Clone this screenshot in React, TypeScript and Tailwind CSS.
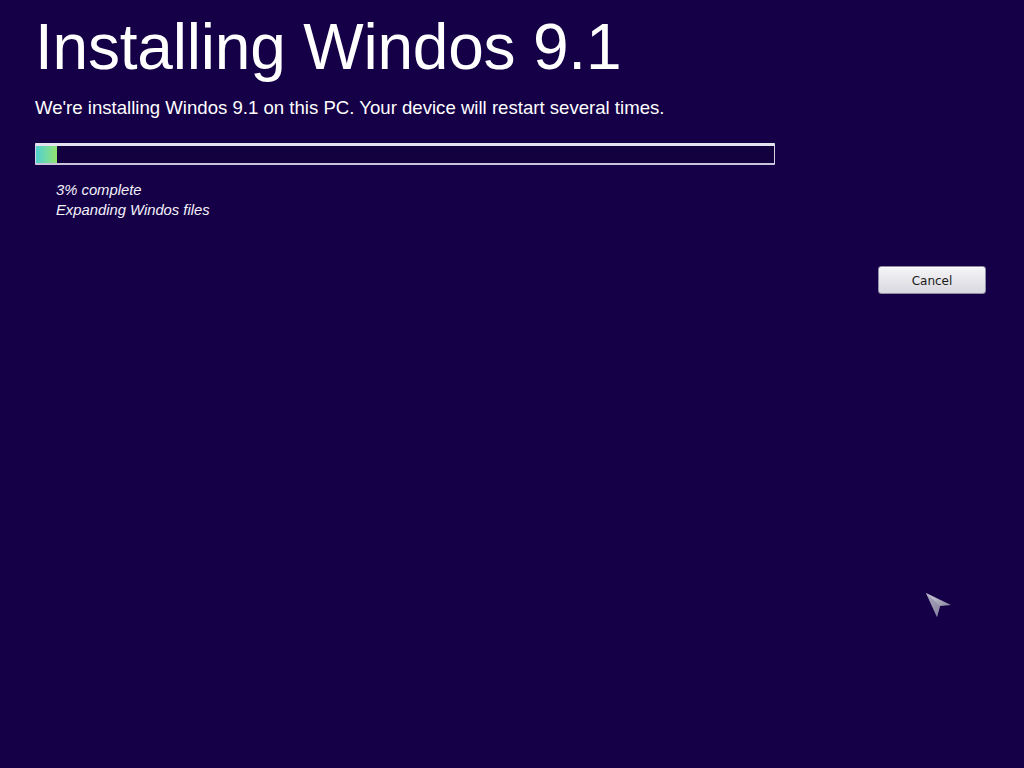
export default function App() {
  return (
    <div className="relative w-[1024px] h-[768px] overflow-hidden bg-[#150048] font-['Liberation_Sans',Arial,sans-serif] text-white">
      <div className="pl-[35px] pt-[9px]">
        <h1 className="text-[64px] leading-[76px] tracking-[-0.2px]">Installing Windos 9.1</h1>
        <p className="mt-[12px] text-[18.6px] leading-[22px]">
          We're installing Windos 9.1 on this PC. Your device will restart several times.
        </p>

        {/* progress bar */}
        <div className="mt-[24px] w-[740px] h-[22px] border border-[#d6d2e6] border-t-[3px] border-t-[#e4e2ee] border-b-2 border-b-[#c8c2dc] bg-[#12003f] rounded-[1px]">
          <div className="w-[21px] h-full bg-gradient-to-r from-[#4fcfd0] to-[#92e36a]" />
        </div>

        <div className="pl-[21px] pt-[15px] italic text-[14.8px] leading-[20px] text-[#f4f2fa]">
          <div>3% complete</div>
          <div>Expanding Windos files</div>
        </div>
      </div>

      <button className="absolute left-[878px] top-[266px] w-[108px] h-[28px] rounded-[3px] border border-[#8f8aa8] bg-gradient-to-b from-[#f6f6f8] to-[#d8d8df] pt-[1px] text-[12px] text-[#1a1a1a] font-['DejaVu_Sans',sans-serif] shadow-[inset_0_1px_0_#ffffff]">
        Cancel
      </button>

      {/* cursor */}
      <svg className="absolute left-[924px] top-[590px]" width="30" height="30" viewBox="0 0 30 30">
        <defs>
          <linearGradient id="cur" x1="0" y1="0" x2="1" y2="1">
            <stop offset="0" stopColor="#d8d6e4" />
            <stop offset="1" stopColor="#6e6a86" />
          </linearGradient>
        </defs>
        <path d="M2 3 L27 15 L16 16 L13 27 Z" fill="url(#cur)" />
        <path d="M2 3 L16 16 L13 27 Z" fill="#8a86a2" opacity="0.6" />
      </svg>
    </div>
  );
}
